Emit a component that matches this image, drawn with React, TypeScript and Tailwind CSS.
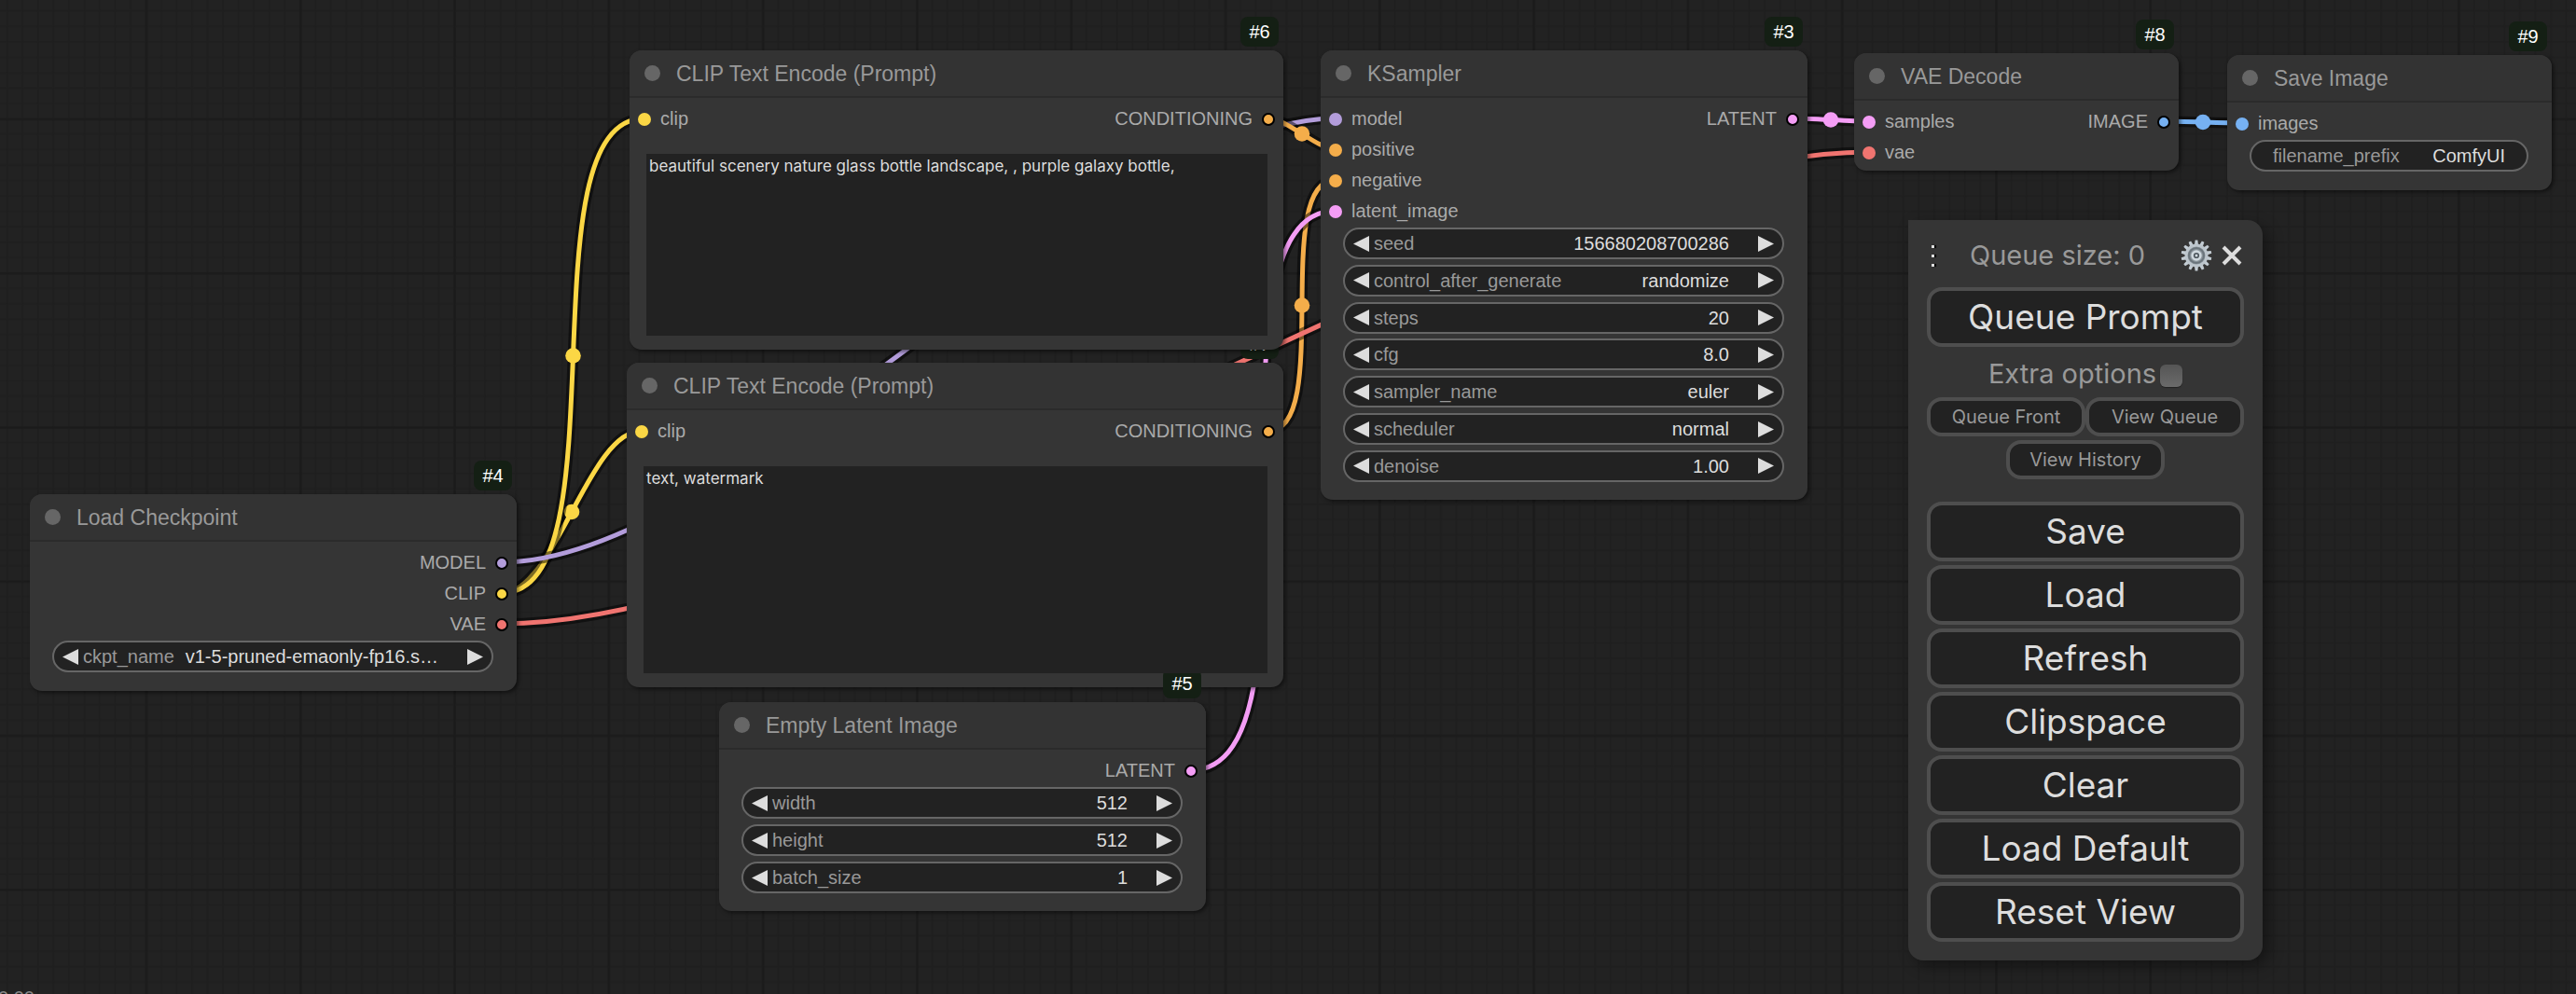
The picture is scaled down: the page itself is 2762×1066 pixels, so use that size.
import React from 'react';

type Slot = { name: string; color: string };
type Widget = { label: string; value: string; kind: 'number' | 'combo' | 'text' };

interface GraphNode {
  id: number;
  title: string;
  x: number;
  y: number;
  w: number;
  h: number;
  inputs?: Slot[];
  outputs?: Slot[];
  widgets?: Widget[];
  prompt?: string;
}

const MODEL = '#b39ddb';
const CLIP = '#fbd745';
const VAE = '#f07470';
const CONDITIONING = '#f4ad4a';
const LATENT = '#f49df5';
const IMAGE = '#76b1f2';

// Later nodes are painted over earlier ones
const NODES: GraphNode[] = [
  {
    id: 7, title: 'CLIP Text Encode (Prompt)', x: 672, y: 389, w: 704, h: 348,
    inputs: [{ name: 'clip', color: CLIP }],
    outputs: [{ name: 'CONDITIONING', color: CONDITIONING }],
    prompt: 'text, watermark',
  },
  {
    id: 6, title: 'CLIP Text Encode (Prompt)', x: 675, y: 54, w: 701, h: 321,
    inputs: [{ name: 'clip', color: CLIP }],
    outputs: [{ name: 'CONDITIONING', color: CONDITIONING }],
    prompt: 'beautiful scenery nature glass bottle landscape, , purple galaxy bottle,',
  },
  {
    id: 5, title: 'Empty Latent Image', x: 771, y: 753, w: 522, h: 224,
    outputs: [{ name: 'LATENT', color: LATENT }],
    widgets: [
      { label: 'width', value: '512', kind: 'number' },
      { label: 'height', value: '512', kind: 'number' },
      { label: 'batch_size', value: '1', kind: 'number' },
    ],
  },
  {
    id: 4, title: 'Load Checkpoint', x: 32, y: 530, w: 522, h: 211,
    outputs: [
      { name: 'MODEL', color: MODEL },
      { name: 'CLIP', color: CLIP },
      { name: 'VAE', color: VAE },
    ],
    widgets: [{ label: 'ckpt_name', value: 'v1-5-pruned-emaonly-fp16.s…', kind: 'combo' }],
  },
  {
    id: 3, title: 'KSampler', x: 1416, y: 54, w: 522, h: 482,
    inputs: [
      { name: 'model', color: MODEL },
      { name: 'positive', color: CONDITIONING },
      { name: 'negative', color: CONDITIONING },
      { name: 'latent_image', color: LATENT },
    ],
    outputs: [{ name: 'LATENT', color: LATENT }],
    widgets: [
      { label: 'seed', value: '156680208700286', kind: 'number' },
      { label: 'control_after_generate', value: 'randomize', kind: 'combo' },
      { label: 'steps', value: '20', kind: 'number' },
      { label: 'cfg', value: '8.0', kind: 'number' },
      { label: 'sampler_name', value: 'euler', kind: 'combo' },
      { label: 'scheduler', value: 'normal', kind: 'combo' },
      { label: 'denoise', value: '1.00', kind: 'number' },
    ],
  },
  {
    id: 8, title: 'VAE Decode', x: 1988, y: 57, w: 348, h: 126,
    inputs: [{ name: 'samples', color: LATENT }, { name: 'vae', color: VAE }],
    outputs: [{ name: 'IMAGE', color: IMAGE }],
  },
  {
    id: 9, title: 'Save Image', x: 2388, y: 59, w: 348, h: 145,
    inputs: [{ name: 'images', color: IMAGE }],
    widgets: [{ label: 'filename_prefix', value: 'ComfyUI', kind: 'text' }],
  },
];

// [from node, output slot, to node, input slot]
const LINKS: [number, number, number, number][] = [
  [4, 1, 7, 0],
  [4, 1, 6, 0],
  [4, 0, 3, 0],
  [6, 0, 3, 1],
  [7, 0, 3, 2],
  [5, 0, 3, 3],
  [3, 0, 8, 0],
  [4, 2, 8, 1],
  [8, 0, 9, 0],
];

const findNode = (id: number) => NODES.find(n => n.id === id)!;
const slotY = (node: GraphNode, slot: number) => node.y + 73 + slot * 33;

const Link = ({ link }: { link: [number, number, number, number] }) => {
  const from = findNode(link[0]);
  const to = findNode(link[2]);
  const color = from.outputs![link[1]].color;
  const x1 = from.x + from.w - 16;
  const y1 = slotY(from, link[1]);
  const x2 = to.x + 16;
  const y2 = slotY(to, link[3]);
  const bend = Math.hypot(x2 - x1, y2 - y1) * 0.25;
  const d = `M${x1} ${y1} C${x1 + bend} ${y1} ${x2 - bend} ${y2} ${x2} ${y2}`;
  return (
    <g fill="none">
      <path d={d} stroke="#000" strokeOpacity={0.5} strokeWidth={11.6} />
      <path d={d} stroke={color} strokeWidth={5} />
      <circle cx={(x1 + x2) / 2} cy={(y1 + y2) / 2} r={8.3} fill={color} />
    </g>
  );
};

const Grid = () => (
  <>
    <defs>
      <pattern id="minor" width="16.529" height="16.529" patternUnits="userSpaceOnUse">
        <path d="M0 1H17M1 0V17" stroke="#1e1e1e" strokeWidth="1.6" />
      </pattern>
      <pattern id="grid" x="155.5" y="126.5" width="165.29" height="165.29" patternUnits="userSpaceOnUse">
        <rect width="166" height="166" fill="url(#minor)" />
        <path d="M0 1.5H166M1.5 0V166" stroke="#1b1b1b" strokeWidth="2.6" />
      </pattern>
    </defs>
    <rect width="100%" height="100%" fill="url(#grid)" />
  </>
);

const Arrow = ({ dir }: { dir: 'left' | 'right' }) => (
  <svg className="w-[17px] h-[17px] block" viewBox="0 0 17 17">
    <path d={dir === 'left' ? 'M17 0V17L0 8.5Z' : 'M0 0V17L17 8.5Z'} fill="#ddd" />
  </svg>
);

const WidgetRow = ({ nodeId, widget }: { nodeId: number; widget: Widget }) => {
  const id = `${nodeId}-${widget.label}`;
  const isText = widget.kind === 'text';
  return (
    <div className={`flex items-center h-[34px] rounded-full border-2 border-[#666] bg-[#222] text-xl leading-6 ${isText ? 'px-[23px]' : 'px-[9px]'}`}>
      {!isText && <button aria-label={`Decrease ${widget.label}`} className="mr-[5px]"><Arrow dir="left" /></button>}
      <label htmlFor={id} className="text-[#999] shrink-0">{widget.label}</label>
      {widget.kind === 'combo' ? (
        <select id={id} className="appearance-none bg-transparent flex-1 min-w-0 text-[#ddd] [text-align-last:right] outline-none">
          <option>{widget.value}</option>
        </select>
      ) : (
        <input id={id} type="text" defaultValue={widget.value} className="bg-transparent flex-1 min-w-0 text-[#ddd] text-right outline-none" />
      )}
      {!isText && <button aria-label={`Increase ${widget.label}`} className="ml-[31px]"><Arrow dir="right" /></button>}
    </div>
  );
};

const NodeCard = ({ node }: { node: GraphNode }) => (
  <section
    className="absolute flex flex-col rounded-[13px] bg-[#353535] shadow-[2px_2px_4px_rgba(0,0,0,0.5)]"
    style={{ left: node.x, top: node.y, width: node.w, height: node.h }}
  >
    <span className="absolute right-[5px] bottom-full mb-1 h-8 w-[41px] rounded-lg bg-[#141f14] text-white text-xl leading-8 text-center">
      #{node.id}
    </span>
    <header className="flex items-center h-[51px] shrink-0 pl-4 gap-[17px] rounded-t-[13px] bg-[#333] border-b-2 border-[#2b2b2b]">
      <span className="w-[17px] h-[17px] rounded-full bg-[#666]" />
      <h2 className="text-[23px] leading-7 text-[#999]">{node.title}</h2>
    </header>
    <div className="flex justify-between shrink-0 pt-1.5 px-[9px] text-xl leading-[33px] text-[#aaa]">
      <ul>
        {node.inputs?.map(s => (
          <li key={s.name} className="flex items-center gap-2.5">
            <span className="w-3.5 h-3.5 rounded-full" style={{ background: s.color }} />
            {s.name}
          </li>
        ))}
      </ul>
      <ul>
        {node.outputs?.map(s => (
          <li key={s.name} className="flex items-center justify-end gap-2.5">
            {s.name}
            <span className="w-3.5 h-3.5 rounded-full border-2 border-black" style={{ background: s.color }} />
          </li>
        ))}
      </ul>
    </div>
    {node.widgets && (
      <div className="flex flex-col flex-1 justify-between pt-px pb-[19px] pl-6 pr-[25px]">
        {node.widgets.map(w => <WidgetRow key={w.label} nodeId={node.id} widget={w} />)}
      </div>
    )}
    {node.prompt && (
      <textarea
        aria-label={`Prompt #${node.id}`}
        defaultValue={node.prompt}
        className="relative z-10 flex-1 mt-[21px] mb-[15px] ml-[18px] mr-[17px] px-[3px] py-[3px] resize-none outline-none bg-[#222] text-[#ddd] font-['Inter',sans-serif] text-[17px] leading-5"
      />
    )}
  </section>
);

const MenuButton = ({ children }: { children: React.ReactNode }) => (
  <button className="w-full h-16 rounded-2xl border-4 border-[#4e4e4e] bg-[#222] text-[#ddd] text-[37px] leading-none pb-0.5">
    {children}
  </button>
);

const SmallButton = ({ children }: { children: React.ReactNode }) => (
  <button className="w-1/2 h-[42px] rounded-2xl border-4 border-[#4e4e4e] bg-[#222] text-[#999] text-xl leading-none">
    {children}
  </button>
);

const TEETH = Array.from({ length: 14 }, (_, i) => (i * 360) / 14);

const Gear = () => (
  <svg className="w-[34px] h-[34px] block" viewBox="-17 -17 34 34">
    {TEETH.map(a => (
      <path key={a} d="M-2 -11L-1.4 -16.4H1.4L2 -11Z" fill="#c3ccd3" transform={`rotate(${a})`} />
    ))}
    <circle r="11" fill="#8b959c" stroke="#bcc5cc" strokeWidth="3" />
    <circle r="8" fill="none" stroke="#6b757c" strokeWidth="2" />
    <circle r="4.4" fill="#4b545b" stroke="#cfd8de" strokeWidth="2.6" />
    <circle r="1.5" fill="#cfd8de" />
  </svg>
);

const QueueMenu = () => (
  <aside className="absolute z-20 left-[2046px] top-[236px] w-[380px] p-5 flex flex-col items-center rounded-2xl rounded-tl-none bg-[#353535] text-[#999] font-['Inter',sans-serif] shadow-[6px_6px_16px_rgba(0,0,0,0.4)]">
    <div className="flex items-center w-full h-9 mb-4">
      <div className="flex flex-col gap-[7px] pl-[5px]">
        {[0, 1, 2].map(i => <span key={i} className="w-[3px] h-[3px] bg-[#ddd] shadow-[2px_0_1px_#000]" />)}
      </div>
      <span className="flex-1 text-center text-[29px] leading-9">Queue size: 0</span>
      <button aria-label="Settings"><Gear /></button>
      <button aria-label="Close" className="ml-2.5 mr-0.5">
        <svg className="w-[22px] h-[22px] block" viewBox="0 0 22 22">
          <path d="M2 2L20 20M20 2L2 20" stroke="#ddd" strokeWidth="4" />
        </svg>
      </button>
    </div>
    <MenuButton>Queue Prompt</MenuButton>
    <label className="flex items-center gap-1 h-[50px] mt-1 text-[29px] leading-9">
      Extra options
      <input type="checkbox" className="appearance-none w-6 h-6 rounded-md mt-1 bg-linear-to-b from-[#555] to-[#6b6b6b] shadow-[0_1px_1px_#222]" />
    </label>
    <div className="flex flex-wrap justify-center gap-y-1 w-full mb-6">
      <SmallButton>Queue Front</SmallButton>
      <SmallButton>View Queue</SmallButton>
      <SmallButton>View History</SmallButton>
    </div>
    <div className="flex flex-col gap-1 w-full">
      <MenuButton>Save</MenuButton>
      <MenuButton>Load</MenuButton>
      <MenuButton>Refresh</MenuButton>
      <MenuButton>Clipspace</MenuButton>
      <MenuButton>Clear</MenuButton>
      <MenuButton>Load Default</MenuButton>
      <MenuButton>Reset View</MenuButton>
    </div>
  </aside>
);

const App: React.FC = () => (
  <main className="relative min-h-screen overflow-hidden bg-[#222] font-['Liberation_Sans',Arial,sans-serif]">
    <svg className="absolute inset-0 w-full h-full">
      <Grid />
      {LINKS.map((link, i) => <Link key={i} link={link} />)}
    </svg>
    {/* Render timing, mostly below the fold */}
    <span className="absolute -left-0.5 -bottom-4 text-xl leading-6 text-[#888]">0.00s</span>
    {NODES.map(node => <NodeCard key={node.id} node={node} />)}
    <QueueMenu />
  </main>
);

export default App;
